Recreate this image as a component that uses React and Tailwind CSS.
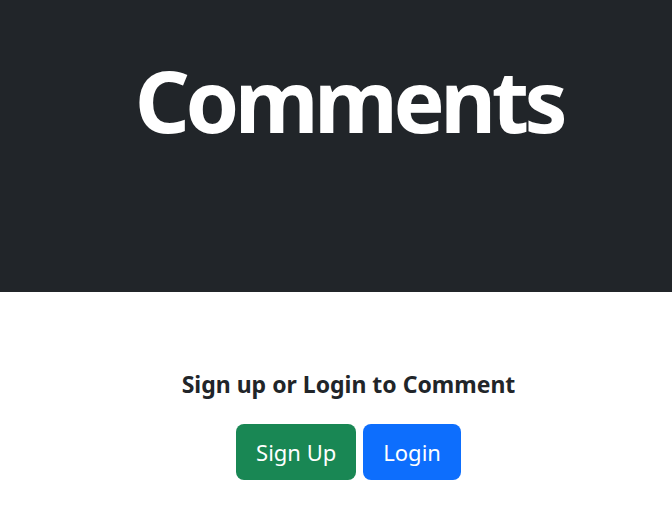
export default function App() {
  return (
    <div className="w-[672px] min-h-[516px] bg-white" style={{ fontFamily: '"Noto Sans", "Open Sans", sans-serif' }}>
      <header className="h-[292px] bg-[#212529] flex justify-center pt-[48px] pl-[26px]">
        <h1 className="text-white font-bold text-[86px] leading-[104px] tracking-[-4.5px]">Comments</h1>
      </header>
      <main className="flex flex-col items-center pt-[78px] pl-[25px]">
        <h5 className="text-[#212529] font-bold text-[23px] leading-[28px]">Sign up or Login to Comment</h5>
        <div className="flex gap-[7px] mt-[26px]">
          <button className="h-[56px] px-[20px] rounded-[8px] bg-[#198754] text-white text-[22px]">Sign Up</button>
          <button className="h-[56px] px-[20px] rounded-[8px] bg-[#0d6efd] text-white text-[22px]">Login</button>
        </div>
      </main>
    </div>
  );
}
